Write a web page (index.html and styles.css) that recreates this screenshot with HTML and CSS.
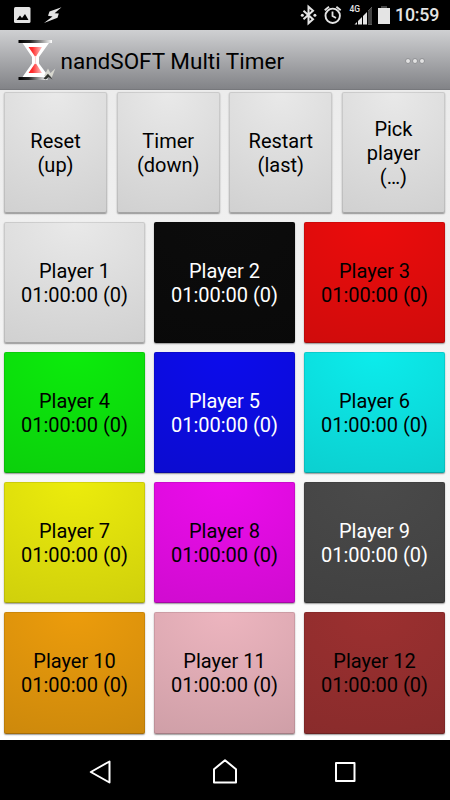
FILE: index.html
```html
<!DOCTYPE html>
<html lang="en">
<head>
<meta charset="utf-8">
<title>nandSOFT Multi Timer</title>
<link rel="stylesheet" href="styles.css">
</head>
<body>
<div class="status">
  <svg class="status-left" width="70" height="30" viewBox="0 0 70 30">
    <rect x="14" y="7" width="16.5" height="16" rx="1.5" fill="#e4e4e4"/>
    <path d="M16.500 20l3.500-4.500 2 2.500 3-4 3.500 6z" fill="#000"/>
    <path d="M61.500 7.200L49.500 11.500l-1.500 4.300 4.500.6L44 23l13.500-5.200 1.300-4.300-4.200-.3z" fill="#e4e4e4"/>
  </svg>
  <svg class="status-icons" width="94" height="30" viewBox="298 0 94 30">
    <path d="M303.500 10.800l9.500 8.500-4.500 4V6.700l4.500 4-9.500 8.500" fill="none" stroke="#e4e4e4" stroke-width="2"/>
    <circle cx="302.300" cy="15.200" r="1.500" fill="#e4e4e4"/><circle cx="314.900" cy="15.200" r="1.500" fill="#e4e4e4"/>
    <circle cx="332.700" cy="15.800" r="7.200" fill="none" stroke="#e4e4e4" stroke-width="1.900"/>
    <path d="M332.500 11.500V16l3.500 2M324.700 10.200l4.300-3.400M336.400 6.800l4.300 3.400" fill="none" stroke="#e4e4e4" stroke-width="1.800"/>
    <path d="M354.500 24.500L372 7v17.500z" fill="#e4e4e4"/>
    <path d="M367.500 11.500L372 7v17.500h-4.500z" fill="#444"/>
    <path d="M357.500 12v13M362.500 12v13M367.500 7v18" stroke="#000" stroke-width="1"/>
    <text class="network" x="349.500" y="12">4G</text>
    <path d="M381 6h6v3h-6z" fill="#444"/>
    <path d="M378 8h12v16h-12z" fill="#e4e4e4"/>
  </svg>
  <span class="clock">10:59</span>
</div>
<header class="bar">
  <svg class="logo" width="40" height="44" viewBox="17 38 40 44">
    <defs>
      <linearGradient id="cap"><stop offset="0" stop-color="#000"/><stop offset=".35" stop-color="#222"/><stop offset="1" stop-color="#fff"/></linearGradient>
      <linearGradient id="sand"><stop offset="0" stop-color="#ff2020"/><stop offset=".3" stop-color="#ff3030"/><stop offset="1" stop-color="#ffc4c4"/></linearGradient>
    </defs>
    <path d="M22.500 43h26.500L39 57v6.500L49 77H22.500L32 63.500V57z" fill="#fff"/>
    <path d="M28.500 47h13.500l-6 9.500h-1zM28.500 73h13.500l-6-9.500h-1z" fill="url(#sand)"/>
    <path d="M35.500 56v8" stroke="#ffd4d4" stroke-width="1"/>
    <rect x="18.500" y="40" width="33.500" height="3" fill="url(#cap)"/>
    <rect x="18.500" y="77" width="29" height="3" fill="url(#cap)"/>
    <path d="M44 76l4-7.500 2.500 4.500 4.800-4.500-3.500 9-2.300-2.500-1 2z" fill="#d7d7cf"/>
    <path d="M43.500 78.500l4.500-4.700 4.500 5.700-4-2.500-2.500 2.500z" fill="#30322d"/>
  </svg>
  <h1 class="title">nandSOFT Multi Timer</h1>
  <div class="more"><i></i><i></i><i></i></div>
</header>
<main>
  <div class="actions">
    <button>Reset<br>(up)</button>
    <button>Timer<br>(down)</button>
    <button>Restart<br>(last)</button>
    <button>Pick<br>player<br>(…)</button>
  </div>
  <div class="players">
    <button>Player 1<br>01:00:00 (0)</button>
    <button class="black light">Player 2<br>01:00:00 (0)</button>
    <button class="red">Player 3<br>01:00:00 (0)</button>
    <button class="green">Player 4<br>01:00:00 (0)</button>
    <button class="blue light">Player 5<br>01:00:00 (0)</button>
    <button class="cyan">Player 6<br>01:00:00 (0)</button>
    <button class="yellow">Player 7<br>01:00:00 (0)</button>
    <button class="magenta">Player 8<br>01:00:00 (0)</button>
    <button class="gray light">Player 9<br>01:00:00 (0)</button>
    <button class="orange">Player 10<br>01:00:00 (0)</button>
    <button class="pink">Player 11<br>01:00:00 (0)</button>
    <button class="brown">Player 12<br>01:00:00 (0)</button>
  </div>
</main>
<nav>
  <svg width="30" height="30" viewBox="85 757 30 30"><path d="M109.500 761.500v21L90.800 772z"/></svg>
  <svg width="30" height="30" viewBox="210 757 30 30"><path d="M214 782.500v-13.300l11-9 11 9v13.300z"/></svg>
  <svg width="30" height="30" viewBox="330 757 30 30"><path d="M336 763h18.500v18H336z"/></svg>
</nav>
</body>
</html>
```
FILE: styles.css
```css
* { box-sizing: border-box; }
body { margin: 0; width: 450px; height: 800px; display: flex; flex-direction: column; font-family: Roboto, sans-serif; background: #000; overflow: hidden; }
svg { display: block; flex: none; }
.status { height: 30px; display: flex; align-items: center; background: #000; color: #e4e4e4; }
.status-icons { margin-left: 228px; }
.network { font-size: 8.5px; font-weight: 500; fill: #e4e4e4; }
.clock { margin-left: 3px; font-size: 17.8px; font-weight: 500; line-height: 30px; letter-spacing: -0.2px; }
.bar { height: 60px; padding: 0 25px 0 17px; display: flex; align-items: center; background: linear-gradient(#cfd0d2, #828387); border-bottom: 1px solid #77787c; }
.title { margin: 2px 0 0 3.5px; font-size: 22.5px; font-weight: 400; line-height: 30px; color: #000; white-space: nowrap; }
.more { margin: 2px 0 0 auto; display: flex; gap: 1px; }
.more i { width: 6px; height: 6px; border-radius: 50%; background: #e2e2e2; border: 0.5px solid #909194; }
main { height: 650px; padding: 1.5px 5px 6.5px 4px; background: linear-gradient(#ececec, #fff); display: flex; flex-direction: column; gap: 9px; }
.actions { height: 121px; display: grid; grid-template-columns: repeat(4, 1fr); gap: 9.5px; }
.players { height: 512px; display: grid; grid-template-columns: repeat(3, 1fr); grid-template-rows: repeat(4, 1fr); gap: 9px; }
button { --top: #e9e9e9; --base: #cecece; min-width: 0; margin: 0; padding: 0.8px 0 0; border: 0; border-radius: 2px; background: radial-gradient(ellipse 130% 120% at 50% 0, var(--top), var(--base)); box-shadow: inset 0 0 0 1px #00000018, inset 0 -1px 0 #00000020, 0 1px 1.5px #00000065; color: #000; font: 400 20px/24px Roboto, sans-serif; text-align: center; }
.actions button { padding-top: 2px; }
.light { color: #fff; }
.black { --top: #0c0c0c; --base: #090909; }
.red { --top: #ec0c0c; --base: #cd0c0c; }
.green { --top: #0cec0c; --base: #0ccd0c; }
.blue { --top: #0c0cec; --base: #0c0ccd; }
.cyan { --top: #0cecec; --base: #0ccdcd; }
.yellow { --top: #ecec0c; --base: #cdcd0c; }
.magenta { --top: #ec0cec; --base: #cd0ccd; }
.gray { --top: #4a4a4a; --base: #404040; }
.orange { --top: #ec9c0c; --base: #ca870c; }
.pink { --top: #edb5bf; --base: #cc9da5; }
.brown { --top: #9c3030; --base: #872b2b; }
nav { height: 60px; padding: 17px 90px 0 85px; display: flex; gap: 95px; background: #000; }
nav svg:last-child { margin-left: -5px; }
nav path { fill: none; stroke: #fff; stroke-width: 2; stroke-linejoin: round; }
```
